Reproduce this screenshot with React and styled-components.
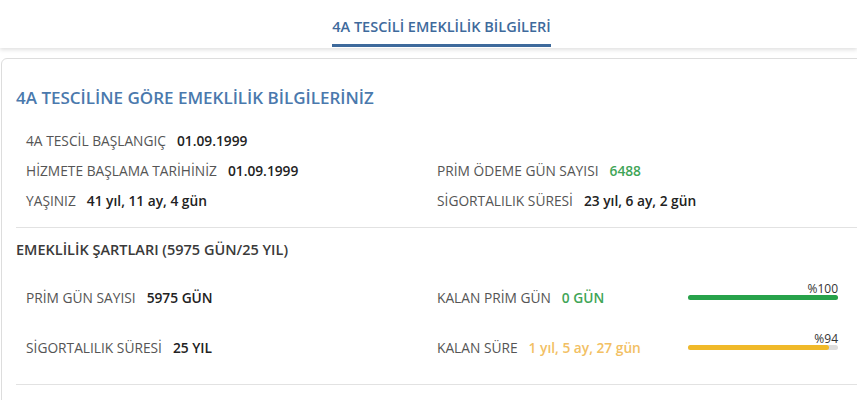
import React from 'react';
import styled, { createGlobalStyle } from 'styled-components';

const GlobalStyle = createGlobalStyle`
  body {
    margin: 0;
    background: #fff;
    font-family: 'Open Sans', 'Liberation Sans', sans-serif;
    color: #222;
    overflow: hidden;
  }
`;

const TabBar = styled.div`
  height: 48px;
  display: flex;
  justify-content: center;
  align-items: flex-end;
  background: #fff;
  box-shadow: 0 2px 4px rgba(0, 0, 0, 0.12);
  position: relative;
  z-index: 1;
`;

const Tab = styled.div`
  font-size: 14.5px;
  font-weight: 600;
  color: #3e6a9c;
  padding: 0 0 8px;
  border-bottom: 3px solid #3e6a9c;
  margin-bottom: 1px;
  margin-left: 26px;
`;

const Page = styled.div`
  padding-top: 10px;
  padding-left: 1px;
  margin-right: -12px;
`;

const Card = styled.div`
  border: 1px solid #ddd;
  border-radius: 6px;
  padding: 0 0 0 14px;
  min-height: 400px;
`;

const Heading = styled.h2`
  margin: 0;
  padding: 27px 0 16px;
  font-size: 17px;
  font-weight: 600;
  color: #4a79ad;
`;

const Grid = styled.div`
  display: grid;
  grid-template-columns: 411px 1fr;
  padding-left: 10px;
`;

const Row = styled.div`
  height: 30px;
  display: flex;
  align-items: center;
  font-size: 13.75px;
  grid-column: ${p => p.$col || 'auto'};
`;

const Label = styled.span`
  color: #555;
  margin-right: 11px;
`;

const Value = styled.span`
  font-weight: 600;
  color: ${p => p.$color || '#222'};
`;

const Divider = styled.hr`
  border: 0;
  border-top: 1px solid #e2e2e2;
  margin: 12px 0 0;
`;

const SubHeading = styled.h3`
  margin: 0;
  padding: 12px 0 13px;
  font-size: 14.5px;
  font-weight: 600;
  color: #3a3a3a;
`;

const Conditions = styled.div`
  padding-left: 10px;
`;

const ProgressRow = styled.div`
  display: flex;
  align-items: center;
  height: 50px;
  font-size: 13.75px;
`;

const Left = styled.div`
  width: 411px;
  display: flex;
  align-items: center;
`;

const Middle = styled.div`
  display: flex;
  align-items: center;
  width: 251px;
`;

const BarWrap = styled.div`
  position: relative;
  width: 150px;
  height: 5px;
  border-radius: 3px;
  background: #ddd;
`;

const BarFill = styled.div`
  height: 100%;
  border-radius: 3px;
  background: ${p => p.$color};
`;

const Percent = styled.span`
  position: absolute;
  right: 0;
  bottom: 3px;
  font-size: 12px;
  color: #333;
`;

const Bar = ({ value, color }) => (
  <BarWrap>
    <Percent>%{value}</Percent>
    <BarFill $color={color} style={{ width: `${value}%` }} />
  </BarWrap>
);

const App = () => (
  <>
    <GlobalStyle />
    <TabBar>
      <Tab>4A TESCİLİ EMEKLİLİK BİLGİLERİ</Tab>
    </TabBar>
    <Page>
      <Card>
        <Heading>4A TESCİLİNE GÖRE EMEKLİLİK BİLGİLERİNİZ</Heading>
        <Grid>
          <Row $col="1 / span 2"><Label>4A TESCİL BAŞLANGIÇ</Label><Value>01.09.1999</Value></Row>
          <Row><Label>HİZMETE BAŞLAMA TARİHİNİZ</Label><Value>01.09.1999</Value></Row>
          <Row><Label>PRİM ÖDEME GÜN SAYISI</Label><Value $color="#3fa557">6488</Value></Row>
          <Row><Label>YAŞINIZ</Label><Value>41 yıl, 11 ay, 4 gün</Value></Row>
          <Row><Label>SİGORTALILIK SÜRESİ</Label><Value>23 yıl, 6 ay, 2 gün</Value></Row>
        </Grid>
        <Divider />
        <SubHeading>EMEKLİLİK ŞARTLARI (5975 GÜN/25 YIL)</SubHeading>
        <Conditions>
          <ProgressRow>
            <Left><Label>PRİM GÜN SAYISI</Label><Value>5975 GÜN</Value></Left>
            <Middle><Label>KALAN PRİM GÜN</Label><Value $color="#3fa557">0 GÜN</Value></Middle>
            <Bar value={100} color="#27a24a" />
          </ProgressRow>
          <ProgressRow>
            <Left><Label>SİGORTALILIK SÜRESİ</Label><Value>25 YIL</Value></Left>
            <Middle><Label>KALAN SÜRE</Label><Value $color="#f2c063">1 yıl, 5 ay, 27 gün</Value></Middle>
            <Bar value={94} color="#f0b929" />
          </ProgressRow>
        </Conditions>
        <Divider />
      </Card>
    </Page>
  </>
);

export default App;
